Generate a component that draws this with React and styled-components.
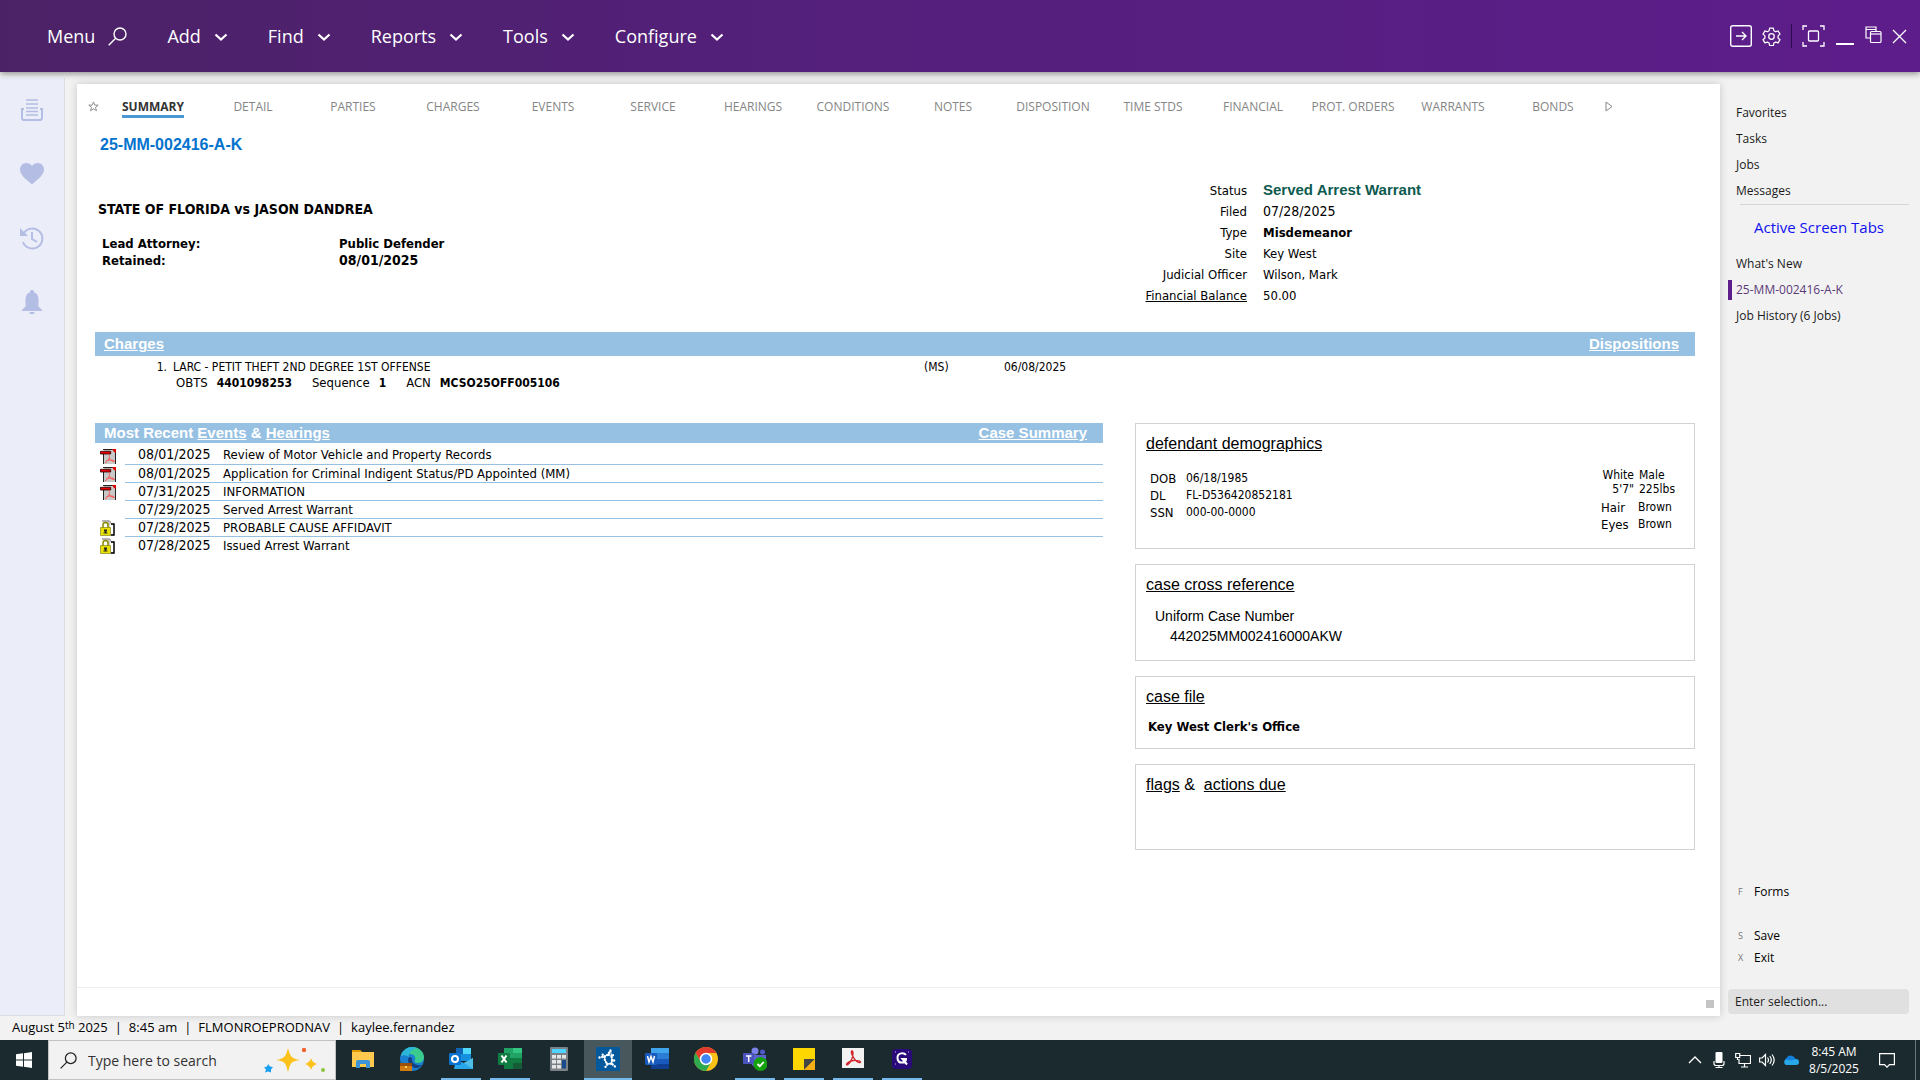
import React from 'react';
import styled, { createGlobalStyle, css } from 'styled-components';

const ui = '"Open Sans", "Noto Sans", sans-serif';
const form = '"DejaVu Sans Condensed", "DejaVu Sans", sans-serif';
const arial = '"Liberation Sans", Arial, sans-serif';

const Global = createGlobalStyle`
  * { box-sizing: border-box; }
  body { margin: 0; background: #f2f2f2; font-family: ${ui}; font-size: 12px; color: #000; }
  button { border: 0; padding: 0; margin: 0; background: none; font: inherit; color: inherit; cursor: pointer; }
  a { color: inherit; }
  svg { display: block; flex: none; }
`;

const Screen = styled.div`
  display: flex;
  flex-direction: column;
  height: 100vh;
  overflow: hidden;
`;

/* ---------- top bar ---------- */
const TopBar = styled.header`
  display: flex;
  align-items: center;
  justify-content: space-between;
  flex: none;
  height: 72px;
  padding: 0 13px 0 47px;
  color: #fff;
  background: linear-gradient(90deg, #4c2266 0%, #53207a 40%, #5d1d8b 100%);
  box-shadow: 0 2px 6px rgba(0, 0, 0, 0.4);
  z-index: 2;
`;
const MainMenu = styled.nav`
  display: flex;
  align-items: center;
  gap: 40px;
`;
const MenuItem = styled.button`
  display: flex;
  align-items: center;
  gap: 13px;
  font-size: 18px;
  line-height: 24px;
`;
const WindowTools = styled.div`
  display: flex;
  align-items: center;
  gap: 10px;
`;
const ToolButton = styled.button`
  display: flex;
`;
const ToolDivider = styled.span`
  width: 1px;
  height: 24px;
  background: #2f0a50;
`;

/* ---------- body ---------- */
const Body = styled.div`
  display: flex;
  flex: 1;
  min-height: 0;
`;
const Rail = styled.nav`
  display: flex;
  flex-direction: column;
  align-items: center;
  gap: 40px;
  flex: none;
  width: 65px;
  margin-top: 6px;
  padding-top: 20px;
  background: #ebedf8;
  border-right: 1px solid #dcdde2;
  border-bottom: 1px solid #dcdde2;
  color: #b4bde4;
`;
const Panel = styled.main`
  display: flex;
  flex-direction: column;
  flex: 1;
  min-width: 0;
  margin: 12px 0 0 12px;
  background: #fff;
  box-shadow: 0 0 8px rgba(0, 0, 0, 0.18);
`;
const TabBar = styled.div`
  display: flex;
  align-items: flex-start;
  padding: 14px 0 0 6px;
  color: #858585;
`;
const TabIcon = styled.button`
  display: flex;
  justify-content: center;
  width: 20px;
  padding-top: 3px;
`;
const MoreTabs = styled(TabIcon)`
  width: 12px;
`;
const Tab = styled.button`
  flex: 0 1 100px;
  white-space: nowrap;
  font-size: 12px;
  line-height: 17px;
`;
const TabText = styled.span`
  display: inline-block;
  ${(p) => p.$active && css`
    font-weight: 700;
    color: #333;
    border-bottom: 3px solid #4a98d3;
  `}
`;
const Record = styled.div`
  flex: 1;
  min-height: 0;
  padding: 17px 25px 0 18px;
  font-family: ${form};
  font-size: 13px;
`;
const CaseNumber = styled.h1`
  margin: 0 0 25px 5px;
  font: 700 16px/20px ${arial};
  color: #0473ce;
`;
const TwoColumns = styled.div`
  display: grid;
  grid-template-columns: 9fr 5fr;
  gap: 32px;
  align-items: start;
`;
const Parties = styled.div`
  padding: 20px 0 0 3px;
`;
const CaseStyle = styled.h2`
  margin: 0 0 17px;
  font-size: 14px;
  line-height: 18px;
`;
const Attorney = styled.dl`
  display: grid;
  grid-template-columns: 237px 1fr;
  margin: 0 0 0 4px;
  font-weight: 700;
  line-height: 17px;
  dd { margin: 0; }
`;
const DateText = styled.time`
  font-size: 14px;
`;
const Facts = styled.dl`
  display: grid;
  grid-template-columns: 112px 1fr;
  column-gap: 16px;
  margin: 0;
  line-height: 21px;
  dt { text-align: right; }
  dd { margin: 0; height: 21px; }
`;
const StatusValue = styled.strong`
  font: 700 15px/20px ${arial};
  color: #0d5b50;
`;
const Bar = styled.div`
  display: flex;
  align-items: center;
  justify-content: space-between;
  height: ${(p) => p.$height}px;
  padding: 0 16px 0 9px;
  background: #96c1e3;
  color: #fff;
  font: 700 15px/20px ${arial};
`;
const ChargesBar = styled(Bar)`
  margin-top: 26px;
`;
const Grid = styled.table`
  width: 100%;
  border-collapse: collapse;
  td { padding: 0; white-space: pre; }
`;
const ChargeGrid = styled(Grid)`
  margin-top: 3px;
  font-size: 12px;
  line-height: 16px;
`;
const Cell = styled.td`
  width: ${(p) => p.$width};
`;
const NumberCell = styled(Cell)`
  && { padding-right: 6px; text-align: right; }
`;
const ChargeDetail = styled.td`
  && { padding-left: 3px; font-size: 13px; }
  span { margin-right: 20px; }
  b { margin-left: 9px; font-size: 12px; }
`;
const Lower = styled(TwoColumns)`
  margin-top: 32px;
`;
const EventGrid = styled(Grid)`
  margin-top: 3px;
  td { height: 18px; line-height: 17px; }
`;
const EventCell = styled(Cell)`
  ${(p) => !p.$last && css`border-bottom: 1px solid #96c1e3;`}
`;
const DateCell = styled(EventCell)`
  && { padding-left: 13px; }
`;
const IconCell = styled.td`
  width: 30px;
  && { padding-left: 5px; vertical-align: bottom; }
`;
const Cards = styled.div`
  display: flex;
  flex-direction: column;
  gap: 15px;
`;
const Card = styled.section`
  min-height: ${(p) => p.$height}px;
  padding: 10px 10px 0;
  border: 1px solid #d2d2d2;
`;
const CardTitle = styled.h3`
  margin: 0 0 11px;
  font: 400 16px/20px ${arial};
  white-space: pre;
`;
const Demographics = styled.div`
  display: flex;
  align-items: flex-start;
  justify-content: space-between;
  padding: 3px 7px 0 4px;
`;
const Ids = styled.dl`
  display: grid;
  grid-template-columns: 36px auto;
  margin: 2px 0 0;
  line-height: 17px;
  dd { margin: 0; font-size: 12px; }
`;
const Physical = styled.div`
  width: 76px;
`;
const Build = styled.div`
  display: grid;
  grid-template-columns: 33px auto;
  column-gap: 5px;
  margin-bottom: 3px;
  font-size: 12px;
  line-height: 14px;
  span:nth-child(odd) { text-align: right; }
`;
const Traits = styled(Ids)`
  grid-template-columns: 37px auto;
`;
const CrossRef = styled.dl`
  margin: 0 0 0 9px;
  font: 14px/20px ${arial};
  dd { margin: 0 0 0 15px; }
`;
const Office = styled.p`
  margin: 0 0 0 2px;
  font-weight: 700;
  line-height: 18px;
`;
const PanelFoot = styled.footer`
  display: flex;
  align-items: center;
  justify-content: flex-end;
  flex: none;
  height: 29px;
  padding: 4px 6px 0 0;
  border-top: 1px solid #eee;
`;
const Grip = styled.span`
  width: 8px;
  height: 8px;
  background: #c4c4c4;
`;

/* ---------- right side ---------- */
const Side = styled.aside`
  display: flex;
  flex-direction: column;
  flex: none;
  width: 200px;
  padding: 31px 11px 2px 8px;
`;
const LinkList = styled.nav`
  display: flex;
  flex-direction: column;
  gap: 6px;
`;
const SideLink = styled.a`
  padding-left: 4px;
  border-left: 4px solid ${(p) => (p.$active ? '#5d1d8b' : 'transparent')};
  color: ${(p) => (p.$active ? '#5b3a78' : '#1a1a1a')};
  line-height: 20px;
  text-decoration: none;
`;
const SideTitle = styled.h2`
  margin: 3px 0 16px 12px;
  padding: 11px 0 0 14px;
  border-top: 1px solid #d6d6d6;
  font-size: 15px;
  font-weight: 400;
  line-height: 22px;
  color: #1010f0;
`;
const Actions = styled.div`
  display: flex;
  flex-direction: column;
  margin: auto 0 20px;
`;
const Action = styled.button`
  display: flex;
  align-items: center;
  margin-bottom: ${(p) => (p.$apart ? 22 : 0)}px;
  padding-left: 10px;
  line-height: 22px;
  text-align: left;
`;
const Key = styled.span`
  width: 16px;
  font-size: 9px;
  color: #777;
`;
const Selection = styled.input`
  width: 100%;
  height: 25px;
  padding: 0 7px;
  border: 0;
  border-radius: 4px;
  background: #e0e0e0;
  font: 12px ${ui};
  &::placeholder { color: #222; opacity: 1; }
`;

/* ---------- status line ---------- */
const StatusLine = styled.div`
  display: flex;
  align-items: center;
  flex: none;
  height: 24px;
  padding: 0 0 2px 12px;
  font-size: 13px;
  span + span::before { content: '|'; margin: 0 7px; }
  sup { font-size: 10px; line-height: 0; vertical-align: 3px; }
`;

/* ---------- task bar ---------- */
const TaskBar = styled.footer`
  display: flex;
  flex: none;
  height: 40px;
  background: #1b2a2e;
  color: #fff;
`;
const Start = styled.button`
  display: flex;
  align-items: center;
  justify-content: center;
  width: 48px;
`;
const Search = styled.label`
  display: flex;
  align-items: center;
  width: 288px;
  padding: 0 9px 0 11px;
  border: 1px solid #c2c2c2;
  background: #f2f2f2;
  color: #222;
`;
const SearchInput = styled.input`
  flex: 1;
  min-width: 0;
  margin-left: 11px;
  padding: 0;
  border: 0;
  background: none;
  font: 14px ${ui};
  &::placeholder { color: #333; opacity: 1; }
`;
const Apps = styled.div`
  display: flex;
  gap: 1px;
  padding-left: 3px;
`;
const AppSlot = styled.span`
  display: grid;
  grid-template-rows: 1fr 2px;
  justify-items: center;
  align-items: center;
  height: 40px;
  width: 48px;
  background: ${(p) => (p.$active ? '#48575b' : 'transparent')};
`;
const OpenMark = styled.span`
  width: ${(p) => (p.$active ? 48 : 40)}px;
  height: 2px;
  background: ${(p) => (p.$open ? '#76b9ed' : 'transparent')};
`;
const Tray = styled.div`
  display: flex;
  align-items: center;
  gap: 8px;
  margin-left: auto;
`;
const Clock = styled.time`
  width: 54px;
  margin-right: 10px;
  text-align: center;
  white-space: nowrap;
  line-height: 17px;
`;
const ShowDesktop = styled.button`
  align-self: stretch;
  width: 5px;
  margin-left: 12px;
  border-left: 1px solid #6c777a;
`;

/* ---------- drawings ---------- */
const Glyph = ({ w = 16, h = w, box, children, ...rest }) => (
  <svg width={w} height={h} viewBox={box || `0 0 ${w} ${h}`} fill="none" stroke="currentColor" aria-hidden="true" {...rest}>
    {children}
  </svg>
);
const Chevron = () => (
  <Glyph w={14} h={9} strokeWidth="2.2"><path d="M1.500 2.500 7 7.500l5.500-5" /></Glyph>
);
const Lens = ({ size = 19 }) => (
  <Glyph w={size} box="0 0 19 19" strokeWidth="1.4"><circle cx="12" cy="7" r="6" /><path d="M7.7 11.3.7 18.3" /></Glyph>
);
const PdfIcon = () => (
  <Glyph w={16} h={15} stroke="none">
    <path d="M4 0h9l3 3v12H4z" fill="#c8c8c8" />
    <path d="M3 0h10v1H3zM15 3h1v12h-1zM3 5h1v10H3z" fill="#222" />
    <path d="M12 0h4v4l-2-1z" fill="#d00" />
    <path d="M.3 2.300h10.400v2.700H.3z" fill="#e80000" stroke="#200" strokeWidth=".8" />
    <path d="M9 5.500c1 3 .5 5-4 8.500M8.800 9c1 2 3 3.500 6 3.500M6 12.200c2-1.500 5-1.500 8-.7" stroke="#f55" fill="none" />
  </Glyph>
);
const LockIcon = () => (
  <Glyph w={15} h={16} stroke="none">
    <path d="M2 1h8l1 3h3v11H9V1z" fill="#fff" stroke="#888" strokeWidth=".8" />
    <path d="M11 4h3v11h-3" stroke="#000" strokeWidth="1.4" />
    <path d="M3 8V5a2.500 2.500 0 0 1 5 0v3" stroke="#8a8a00" strokeWidth="1.500" />
    <path d="M.5 7.500h10v8H.5z" fill="#e8e000" stroke="#77770a" strokeWidth=".6" />
    <path d="M4 9.500h3v2H6.200v1H7.500v1h-4v-1h1.300v-1H4z" fill="#222" />
  </Glyph>
);

const taskApps = [
  { name: 'File Explorer', art: <><path d="M1 3h8l2 2h12v15H1z" fill="#fdc94e" /><path d="M1 3h8l1.500 2H1z" fill="#e09b00" /><path d="M5 21v-6a2 2 0 0 1 2-2h10a2 2 0 0 1 2 2v6h-4v-4H9v4z" fill="#3d94d8" /></> },
  { name: 'Edge', art: <><circle cx="12" cy="12" r="12" fill="#1b7fd0" /><path d="M1 9C3 3 8 0 12 0c7 0 12 5 12 10 0 4-3 6-6 6s-4-1-3-3c1-3-1-6-5-6-4-.5-7 0-9 2z" fill="#3ccb8f" /><path d="M1 9C3 3 8 0 12 0c2 0 4 .5 5 1-5 1-9 5-8 9-3-2-6-2-8-1z" fill="#2bb5d8" /><path d="M9 10c-2 3-1 9 6 11 3 .500 5-1 7-3-5 1-11-1-10-7z" fill="#123f7c" /><path d="M0 16h12v8H0z" fill="#d07a10" /><path d="M0 16h12v3H0z" fill="#9a4f08" /><path d="M5 19h2v2H5z" fill="#ffd35a" /></> },
  { name: 'Outlook', open: true, art: <><path d="M7 1h15v13H7z" fill="#1490df" /><path d="M14 1h8v6h-8z" fill="#50d9ff" /><path d="M7 1h7v6H7z" fill="#0f64b5" /><path d="M5 22h19V11l-9 5-8-3z" fill="#28a8ea" /><path d="m24 22-9-6 9-5z" fill="#50bfe8" /><rect y="6" width="12" height="12" rx="1" fill="#0a72cf" /><circle cx="6" cy="12" r="3" stroke="#fff" strokeWidth="2" /></> },
  { name: 'Excel', open: true, art: <><path d="M6 1h18v21H6z" fill="#21a366" /><path d="M15 1h9v5h-9z" fill="#33c481" /><path d="M6 11h18v11H6z" fill="#107c41" /><path d="M15 16h9v6h-9z" fill="#185c37" /><rect y="6" width="12" height="12" rx="1" fill="#107c41" /><path d="m3.500 8.500 5 7m0-7-5 7" stroke="#fff" strokeWidth="2" /></> },
  { name: 'Calculator', art: <><rect x="3" width="18" height="24" rx="1" fill="#7a8288" /><path d="M5 2h14v4H5z" fill="#4cd3ff" /><path d="M5 8h4v3.500H5zm5 0h4v3.500h-4zm5 0h4v3.500h-4zM5 13h4v3.500H5zm5 0h4v3.500h-4zM5 18h4v3.500H5zm5 0h4v3.500h-4z" fill="#e3e5e6" /><path d="M15 13h4v8.500h-4z" fill="#1a4b8c" /></> },
  { name: 'Case Navigator', open: true, active: true, art: <><path d="M0 0h24v24H0z" fill="#04599c" /><path d="M14.500 3.500 12 7.500 8.500 9.500 5 6M3.500 10.500l5-1 .5 4.500 2.500 3L9 20.500M11.500 17l4-.5 3.500 3M15.500 16.500l.500-3.500 4.500 1M16 13l-.500-4 3.500-2M15.500 9 12 7.500" stroke="#fff" strokeWidth="2.400" strokeLinecap="round" strokeDasharray=".1 2.700" /><path d="M14.500 3.500 12 7.500 8.500 9.500 9 14l2.500 3 4-.5.500-3.500-.5-4z" stroke="#fff" strokeWidth="1" /></> },
  { name: 'Word', art: <><path d="M6 1h18v6H6z" fill="#41a5ee" /><path d="M6 6h18v6H6z" fill="#2b7cd3" /><path d="M6 12h18v5H6z" fill="#185abd" /><path d="M6 17h18v5H6z" fill="#103f91" /><rect y="6" width="12" height="12" rx="1" fill="#185abd" /><path d="m2.500 9 1.500 6 2-5.500L8 15l1.500-6" stroke="#fff" strokeWidth="1.500" /></> },
  { name: 'Chrome', art: <><circle cx="12" cy="12" r="12" fill="#fbc116" /><path d="M1.600 6A12 12 0 0 1 22.400 6H12L6.800 15z" fill="#e33b2e" /><path d="M1.600 6A12 12 0 0 0 12 24l5.200-9H6.800z" fill="#2da94f" /><circle cx="12" cy="12" r="5.500" fill="#4285f4" stroke="#fff" strokeWidth="1.500" /></> },
  { name: 'Teams', open: true, art: <><circle cx="12" cy="4" r="3.500" fill="#7b83eb" /><circle cx="19.500" cy="5" r="2.500" fill="#5059c9" /><path d="M7 8h16v8a6 6 0 0 1-6 5 8 8 0 0 1-9-5z" fill="#5b62d0" /><rect y="6" width="11" height="11" rx="1" fill="#4b53bc" /><path d="M3 9h5.500M5.700 9v6" stroke="#fff" strokeWidth="1.500" /><circle cx="17.500" cy="17" r="7" fill="#13a10e" /><path d="m14.500 17 2.300 2.200 4-4.200" stroke="#fff" strokeWidth="1.800" /></> },
  { name: 'Sticky Notes', open: true, art: <><path d="M1 1h22v22H1z" fill="#ffd700" /><path d="M12 23V12h11z" fill="#444" /><path d="m12 23 11-11v11z" fill="#f5ae14" /></> },
  { name: 'Acrobat', open: true, art: <><path d="M1 1h22v20H1z" fill="#f2f2f2" /><path d="M11 4c-1.500 0 0 4 1.500 6.500C14 13 17 16 19 15.500c2-1-3-2.500-6.500-2-3 .300-7.500 2.500-7 4 .700 1.500 4-2 5.500-6C12 8 12.500 4 11 4z" stroke="#d2232a" strokeWidth="1.400" /></> },
  { name: 'Capture', open: true, art: <><rect x="2" y="2" width="20" height="20" rx="4" fill="#2a0a78" /><path d="M16 8c-2-2.500-8-2.500-8.500 2s2.500 6 5 5.500 3.500-2 3.500-3.500h-3.500l4.500 5.500" stroke="#fff" strokeWidth="2" /><path d="M5 5h1m12 0h1M5 17h1" stroke="#cbb8ff" /></> },
];

const menus = ['Add', 'Find', 'Reports', 'Tools', 'Configure'];
const tabs = ['SUMMARY', 'DETAIL', 'PARTIES', 'CHARGES', 'EVENTS', 'SERVICE', 'HEARINGS', 'CONDITIONS', 'NOTES', 'DISPOSITION', 'TIME STDS', 'FINANCIAL', 'PROT. ORDERS', 'WARRANTS', 'BONDS'];
const events = [
  ['pdf', '08/01/2025', 'Review of Motor Vehicle and Property Records'],
  ['pdf', '08/01/2025', 'Application for Criminal Indigent Status/PD Appointed (MM)'],
  ['pdf', '07/31/2025', 'INFORMATION'],
  [null, '07/29/2025', 'Served Arrest Warrant'],
  ['lock', '07/28/2025', 'PROBABLE CAUSE AFFIDAVIT'],
  ['lock', '07/28/2025', 'Issued Arrest Warrant'],
];

function Header() {
  return (
    <TopBar>
      <MainMenu>
        <MenuItem>Menu <Lens /></MenuItem>
        {menus.map((m) => <MenuItem key={m}>{m} <Chevron /></MenuItem>)}
      </MainMenu>
      <WindowTools>
        <ToolButton aria-label="Go"><Glyph w={22} strokeWidth="1.400"><rect x=".7" y=".7" width="20.600" height="20.600" rx="2" /><path d="M6 11h10M12 7l4 4-4 4" /></Glyph></ToolButton>
        <ToolButton aria-label="Settings">
          <Glyph w={19} box="0 0 24 24" strokeWidth="1.600"><circle cx="12" cy="12" r="3.500" /><path d="M9.700 1.500h4.600l.7 3.200 2.300 1.300 3.100-1 2.300 4-2.400 2.200v2.600l2.400 2.200-2.300 4-3.100-1-2.300 1.300-.7 3.200H9.700L9 20.300 6.700 19l-3.100 1-2.300-4 2.400-2.200v-2.600L1.300 9l2.300-4 3.100 1L9 4.700z" strokeLinejoin="round" /></Glyph>
        </ToolButton>
        <ToolDivider />
        <ToolButton aria-label="Full screen"><Glyph w={23} h={22} strokeWidth="1.300"><path d="M1 5V1h4M18 1h4v4M22 17v4h-4M5 21H1v-4" /><rect x="6.500" y="6" width="10" height="10" rx="1" /></Glyph></ToolButton>
        <ToolButton aria-label="Minimize"><Glyph w={20} h={20} strokeWidth="2"><path d="M1 18h18" /></Glyph></ToolButton>
        <ToolButton aria-label="Restore"><Glyph w={17} h={20} strokeWidth="1.200"><path d="M5 12H1V1h10v4M1 3.500h10" /><rect x="5.500" y="5.500" width="10.500" height="11" rx="1" /><path d="M5.500 8H16" /></Glyph></ToolButton>
        <ToolButton aria-label="Close"><Glyph w={15} strokeWidth="1.300"><path d="m1 1 13 13M14 1 1 14" /></Glyph></ToolButton>
      </WindowTools>
    </TopBar>
  );
}

function LeftRail() {
  return (
    <Rail>
      <ToolButton aria-label="Inbox"><Glyph w={24} strokeWidth="2"><path d="M6 2h12M6 6h12M6 10h12M6 13.500h12M6 17h12" strokeWidth="1.500" /><path d="M4 11H2v9a2 2 0 0 0 2 2h16a2 2 0 0 0 2-2v-9h-2" /></Glyph></ToolButton>
      <ToolButton aria-label="Favorites"><Glyph w={24} fill="currentColor" stroke="none"><path d="M12 22.500C5 16.500 0 12.500 0 7.500A6.300 6.300 0 0 1 6.500 1 7 7 0 0 1 12 3.700 7 7 0 0 1 17.500 1 6.300 6.300 0 0 1 24 7.500c0 5-5 9-12 15z" /></Glyph></ToolButton>
      <ToolButton aria-label="History"><Glyph w={24} strokeWidth="2"><path d="M3 9a10 10 0 1 1 0 7" /><path d="M0 2v8h8z" fill="currentColor" stroke="none" /><path d="M12 6v7l5 3" /></Glyph></ToolButton>
      <ToolButton aria-label="Alerts"><Glyph w={24} fill="currentColor" stroke="none"><path d="M12 0a2 2 0 0 1 2 2.300c3 1 4.500 3.700 4.500 7.200v7L22 20v1H2v-1l3.500-3.500v-7C5.500 6 7 3.300 10 2.300A2 2 0 0 1 12 0zM9.500 22h5a2.500 2.500 0 0 1-5 0z" /></Glyph></ToolButton>
    </Rail>
  );
}

function CaseRecord() {
  return (
    <Record>
      <CaseNumber>25-MM-002416-A-K</CaseNumber>
      <TwoColumns>
        <Parties>
          <CaseStyle>STATE OF FLORIDA vs JASON DANDREA</CaseStyle>
          <Attorney>
            <dt>Lead Attorney:</dt><dd>Public Defender</dd>
            <dt>Retained:</dt><dd><DateText>08/01/2025</DateText></dd>
          </Attorney>
        </Parties>
        <Facts>
          <dt>Status</dt><dd><StatusValue>Served Arrest Warrant</StatusValue></dd>
          <dt>Filed</dt><dd><DateText>07/28/2025</DateText></dd>
          <dt>Type</dt><dd><b>Misdemeanor</b></dd>
          <dt>Site</dt><dd>Key West</dd>
          <dt>Judicial Officer</dt><dd>Wilson, Mark</dd>
          <dt><a href="#balance">Financial Balance</a></dt><dd>50.00</dd>
        </Facts>
      </TwoColumns>
      <ChargesBar $height={24}><a href="#charges">Charges</a><a href="#dispositions">Dispositions</a></ChargesBar>
      <ChargeGrid>
        <tbody>
          <tr>
            <NumberCell $width="78px">1.</NumberCell>
            <Cell $width="751px">LARC - PETIT THEFT 2ND DEGREE 1ST OFFENSE</Cell>
            <Cell $width="80px">(MS)</Cell>
            <td>06/08/2025</td>
          </tr>
          <tr>
            <td />
            <ChargeDetail colSpan={3}>
              <span>OBTS<b>4401098253</b></span><span>Sequence<b>1</b></span><span>ACN<b>MCSO25OFF005106</b></span>
            </ChargeDetail>
          </tr>
        </tbody>
      </ChargeGrid>
      <Lower>
        <section>
          <Bar $height={20}>
            <span>Most Recent <a href="#events">Events</a> &amp; <a href="#hearings">Hearings</a></span>
            <a href="#case-summary">Case Summary</a>
          </Bar>
          <EventGrid>
            <tbody>
              {events.map(([icon, date, text], i) => (
                <tr key={text}>
                  <IconCell>{icon === 'pdf' ? <PdfIcon /> : icon === 'lock' ? <LockIcon /> : null}</IconCell>
                  <DateCell $width="98px" $last={i === events.length - 1}><DateText>{date}</DateText></DateCell>
                  <EventCell $last={i === events.length - 1}>{text}</EventCell>
                </tr>
              ))}
            </tbody>
          </EventGrid>
        </section>
        <Cards>
          <Card $height={126}>
            <CardTitle><a href="#demographics">defendant demographics</a></CardTitle>
            <Demographics>
              <Ids>
                <dt>DOB</dt><dd>06/18/1985</dd>
                <dt>DL</dt><dd>FL-D536420852181</dd>
                <dt>SSN</dt><dd>000-00-0000</dd>
              </Ids>
              <Physical>
                <Build><span>White</span><span>Male</span><span>5'7"</span><span>225lbs</span></Build>
                <Traits><dt>Hair</dt><dd>Brown</dd><dt>Eyes</dt><dd>Brown</dd></Traits>
              </Physical>
            </Demographics>
          </Card>
          <Card $height={97}>
            <CardTitle><a href="#cross-reference">case cross reference</a></CardTitle>
            <CrossRef><dt>Uniform Case Number</dt><dd>442025MM002416000AKW</dd></CrossRef>
          </Card>
          <Card $height={73}>
            <CardTitle><a href="#case-file">case file</a></CardTitle>
            <Office>Key West Clerk's Office</Office>
          </Card>
          <Card $height={86}>
            <CardTitle><a href="#flags">flags</a> &amp;  <a href="#actions">actions due</a></CardTitle>
          </Card>
        </Cards>
      </Lower>
    </Record>
  );
}

function RightSide() {
  return (
    <Side>
      <LinkList>
        {['Favorites', 'Tasks', 'Jobs', 'Messages'].map((t) => <SideLink key={t} href="#">{t}</SideLink>)}
      </LinkList>
      <SideTitle>Active Screen Tabs</SideTitle>
      <LinkList>
        <SideLink href="#">What's New</SideLink>
        <SideLink href="#" $active>25-MM-002416-A-K</SideLink>
        <SideLink href="#">Job History (6 Jobs)</SideLink>
      </LinkList>
      <Actions>
        <Action $apart><Key>F</Key>Forms</Action>
        <Action><Key>S</Key>Save</Action>
        <Action><Key>X</Key>Exit</Action>
      </Actions>
      <Selection aria-label="Selection" placeholder="Enter selection..." />
    </Side>
  );
}

function Desktop() {
  return (
    <TaskBar>
      <Start aria-label="Start"><Glyph w={16} fill="#fff" stroke="none"><path d="M0 2.300 7 1.300v6.300H0zM8 1.200 16 0v7.600H8zM0 8.500h7v6.300l-7-1zM8 8.500h8V16l-8-1.200z" /></Glyph></Start>
      <Search>
        <Lens size={17} />
        <SearchInput aria-label="Search" placeholder="Type here to search" />
        <Glyph w={62} h={26} stroke="none">
          <path d="M24 1q2 8 4 9 2 2 8 3-7 1-8.500 3-1.500 1-3.500 9-2-8-3.500-9Q19 14 12 13q6-1 8-3 2-1 4-9z" fill="#fcc21b" />
          <path d="M47 11q1 4.500 6 6-5 1.500-6 6-1-4.500-6-6 5-1.500 6-6z" fill="#fcc21b" />
          <path d="M4 17l2 2.500 3 .500-2 2.500v3l-3-1-3 1 1-3-2-2 3-1z" fill="#1aa0f0" />
          <circle cx="40" cy="3" r="2.200" fill="#f0642d" /><circle cx="59" cy="23" r="2" fill="#8cc63f" />
        </Glyph>
      </Search>
      <Apps>
        {taskApps.map((a) => (
          <button key={a.name} aria-label={a.name}>
            <AppSlot $active={a.active}>
              <Glyph w={24} stroke="none">{a.art}</Glyph>
              <OpenMark $open={a.open} $active={a.active} />
            </AppSlot>
          </button>
        ))}
      </Apps>
      <Tray>
        <Glyph strokeWidth="1.400"><path d="m2 11 6-6 6 6" /></Glyph>
        <Glyph strokeWidth="1.200"><rect x="4.500" y="0" width="7" height="11" rx="1" fill="#fff" stroke="none" /><path d="M3 9v2.500a2 2 0 0 0 2 2h6a2 2 0 0 0 2-2V9M8 13v3M4.500 15.500h7" /></Glyph>
        <Glyph strokeWidth="1.200"><path d="M5 3.500h10.500v8H4V7M9.500 12v3M6 15h7M.7 1.500h4v4h-4zM2.500 5v3" /></Glyph>
        <Glyph strokeWidth="1.200"><path d="M.6 6h2.500L6.500 2.500v11L3.100 10H.6zM8.500 5.500q2 2.500 0 5M10.700 4q3.200 4 0 8M13 2.500q4.400 5.500 0 11" /></Glyph>
        <Glyph stroke="none"><path d="M4 13a4 4 0 0 1-.5-7A5 5 0 0 1 12.500 7 3.200 3.200 0 0 1 13 13z" fill="#1480dd" /><path d="M3 13a3 3 0 0 1 0-5.500l5 1 5-1.500a3 3 0 0 1 0 6z" fill="#28a8ea" /></Glyph>
        <Clock>8:45 AM<br />8/5/2025</Clock>
        <Glyph strokeWidth="1.200"><path d="M.6 1.600h14.800v11H10.500L8 15.200 5.500 12.600H.6z" /></Glyph>
        <ShowDesktop aria-label="Show desktop" />
      </Tray>
    </TaskBar>
  );
}

export default function App() {
  return (
    <Screen>
      <Global />
      <Header />
      <Body>
        <LeftRail />
        <Panel>
          <TabBar>
            <TabIcon aria-label="Pin"><Glyph w={11} box="0 0 24 24" strokeWidth="2"><path d="m12 2 2.800 7h7.500l-6 4.800 2.300 7.500L12 17l-6.600 4.300 2.300-7.500-6-4.800h7.500z" /></Glyph></TabIcon>
            {tabs.map((t, i) => <Tab key={t}><TabText $active={i === 0}>{t}</TabText></Tab>)}
            <MoreTabs aria-label="More tabs"><Glyph w={8} h={11}><path d="M1 1v9l6-4.500z" /></Glyph></MoreTabs>
          </TabBar>
          <CaseRecord />
          <PanelFoot><Grip /></PanelFoot>
        </Panel>
        <RightSide />
      </Body>
      <StatusLine>
        <span>August 5<sup>th</sup> 2025</span><span>8:45 am</span><span>FLMONROEPRODNAV</span><span>kaylee.fernandez</span>
      </StatusLine>
      <Desktop />
    </Screen>
  );
}
